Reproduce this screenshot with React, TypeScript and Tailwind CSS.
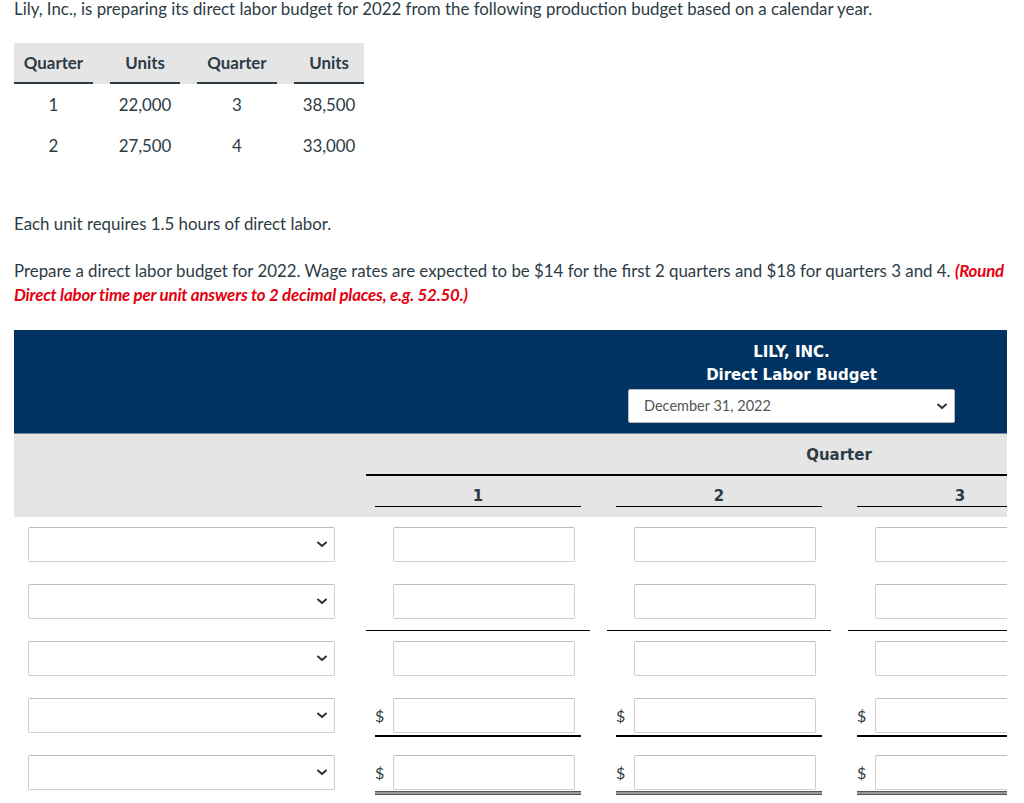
import React from "react";

const production = [
  { q1: "1", u1: "22,000", q2: "3", u2: "38,500" },
  { q1: "2", u1: "27,500", q2: "4", u2: "33,000" },
];

const quarters = ["1", "2", "3", "4"];

function Chevron({ className = "" }: { className?: string }) {
  return (
    <svg viewBox="0 0 10 6" className={className} fill="none">
      <path d="M1 1l4 3.6L9 1" stroke="#333" strokeWidth="2" strokeLinecap="round" strokeLinejoin="round" />
    </svg>
  );
}

function Field() {
  return <div className="h-[35px] w-[182px] shrink-0 rounded-[2px] border border-[#cfcfcf] border-t-[#bdbdbd] bg-white" />;
}

function RowSelect() {
  return (
    <div className="ml-[14px] mt-[10px] flex h-[35px] w-[307px] items-center justify-end rounded-[2px] border border-[#cfcfcf] border-t-[#bdbdbd] bg-white pr-[7px]">
      <Chevron className="h-[7px] w-[10px]" />
    </div>
  );
}

/** one body row of the labor budget; kind picks the ruling under each amount */
function BudgetRow({ kind }: { kind: "plain" | "sub" | "dollar" | "total" }) {
  return (
    <div className="flex h-[57px]">
      <div className="w-[352px] shrink-0">
        <RowSelect />
      </div>
      {quarters.map((q) => (
        <div key={q} className="relative w-[241px] shrink-0">
          {kind === "plain" || kind === "sub" ? (
            <div className="ml-[27px] mt-[10px]">
              <Field />
            </div>
          ) : (
            <div className="ml-[9px] mt-[10px] w-[206px]">
              <div className="flex items-center">
                <span className="w-[18px] text-[16px] leading-none">$</span>
                <Field />
              </div>
              {kind === "dollar" ? (
                <div className="mt-[2px] h-[2px] bg-black" />
              ) : (
                <div className="mt-[1px] h-[4px] border-y-[1.5px] border-[#555] bg-[#999]" />
              )}
            </div>
          )}
          {kind === "sub" && <div className="absolute bottom-0 left-0 h-[1.5px] w-[224px] bg-black" />}
        </div>
      ))}
    </div>
  );
}

export default function App() {
  return (
    <div className="min-h-[803px] overflow-hidden bg-white px-[14px] font-['Lato',sans-serif] text-[16.85px] text-[#2d3b45]">
      <p className="leading-[18px]">
        Lily, Inc., is preparing its direct labor budget for 2022 from the following production budget based on a calendar year.
      </p>

      <div className="mt-[25px] w-[350px]">
        <div className="flex h-[41px] gap-[17px] bg-[#e5e5e5] font-bold">
          {["Quarter", "Units", "Quarter", "Units"].map((h, i) => (
            <div
              key={i}
              className={`flex items-center justify-center border-b-2 border-[#2d3b45] ${
                i === 0 ? "w-[79px]" : i === 1 ? "w-[70px]" : i === 2 ? "w-[80px]" : "w-[70px]"
              }`}
            >
              {h}
            </div>
          ))}
        </div>
        {production.map((r) => (
          <div key={r.q1} className="flex h-[41px] items-center gap-[17px]">
            <div className="w-[79px] text-center">{r.q1}</div>
            <div className="w-[70px] text-center">{r.u1}</div>
            <div className="w-[80px] text-center">{r.q2}</div>
            <div className="w-[70px] text-center">{r.u2}</div>
          </div>
        ))}
      </div>

      <p className="mt-[46px] leading-[24px]">Each unit requires 1.5 hours of direct labor.</p>

      <p className="mt-[23px] leading-[24px]">
        Prepare a direct labor budget for 2022. Wage rates are expected to be $14 for the first 2 quarters and $18 for quarters 3 and 4.{" "}
        <span className="font-bold italic tracking-[-0.18px] text-[#e3000f]">
          (Round Direct labor time per unit answers to 2 decimal places, e.g. 52.50.)
        </span>
      </p>

      <div className="mt-[23px] w-[993px] overflow-hidden">
        <div className="h-[103px] bg-[#003362] pt-[11px]">
          <div className="ml-[614px] w-[327px] text-center font-['DejaVu_Sans',sans-serif] text-[15px] font-bold leading-[22px] text-white">
            <div>LILY, INC.</div>
            <div className="mt-[1px]">Direct Labor Budget</div>
            <div className="mt-[3px] flex h-[34px] items-center justify-between rounded-[2px] border border-[#bbb] bg-white pl-[15px] pr-[7px] text-left font-['Lato',sans-serif] text-[14.5px] font-normal text-[#555]">
              <span>December 31, 2022</span>
              <Chevron className="h-[7px] w-[10px]" />
            </div>
          </div>
        </div>

        <div className="h-[84px] border-t border-[#6f8aa6] bg-[#e5e5e5] pt-[11px] font-['DejaVu_Sans',sans-serif] text-[15px] font-bold text-[#2d3b45]">
          <div className="ml-[352px] w-[964px] pr-[18px] text-center leading-[20px]">Quarter</div>
          <div className="ml-[352px] mt-[9px] h-[1.5px] w-[964px] bg-black" />
          <div className="flex">
            <div className="w-[352px] shrink-0" />
            {quarters.map((q) => (
              <div key={q} className="w-[241px] shrink-0 pl-[9px]">
                <div className="mt-[10px] w-[206px] border-b-[1.5px] border-black text-center leading-[20px]">{q}</div>
              </div>
            ))}
          </div>
        </div>

        <BudgetRow kind="plain" />
        <BudgetRow kind="sub" />
        <BudgetRow kind="plain" />
        <BudgetRow kind="dollar" />
        <BudgetRow kind="total" />
      </div>
    </div>
  );
}
